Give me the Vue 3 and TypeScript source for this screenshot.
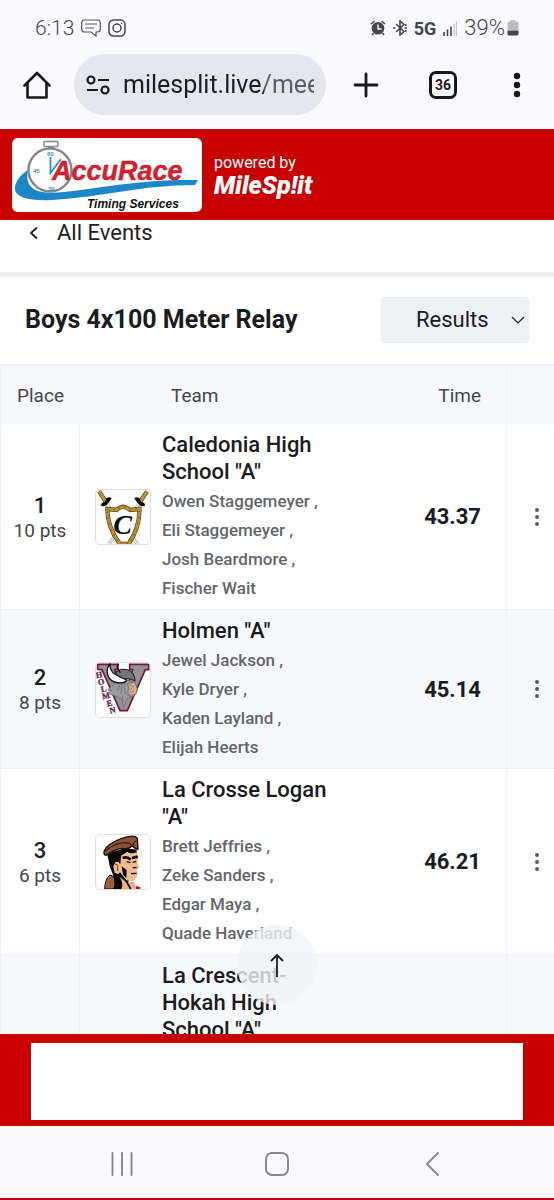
<script setup lang="ts">
import { ref } from 'vue'

interface Team {
  place: number | null
  points: string
  name: string
  runners: string[]
  time: string
  logo: 'shield' | 'viking' | 'ranger' | null
}

const teams: Team[] = [
  {
    place: 1,
    points: '10 pts',
    name: 'Caledonia High School "A"',
    runners: ['Owen Staggemeyer', 'Eli Staggemeyer', 'Josh Beardmore', 'Fischer Wait'],
    time: '43.37',
    logo: 'shield',
  },
  {
    place: 2,
    points: '8 pts',
    name: 'Holmen "A"',
    runners: ['Jewel Jackson', 'Kyle Dryer', 'Kaden Layland', 'Elijah Heerts'],
    time: '45.14',
    logo: 'viking',
  },
  {
    place: 3,
    points: '6 pts',
    name: 'La Crosse Logan "A"',
    runners: ['Brett Jeffries', 'Zeke Sanders', 'Edgar Maya', 'Quade Haverland'],
    time: '46.21',
    logo: 'ranger',
  },
  {
    place: null,
    points: '',
    name: 'La Crescent-Hokah High School "A"',
    runners: [],
    time: '',
    logo: null,
  },
]

const address = ref('milesplit.live/meets')
const view = ref('Results')
</script>

<template>
  <div class="screen">
    <div class="status">
      <div class="status-group">
        <span class="clock">6:13</span>
        <svg class="ico-msg" viewBox="0 0 20 18" fill="none" stroke="#55565b" stroke-width="1.2">
          <path d="M3.5 1h13Q19.300 1 19.300 4v6q0 3-2.800 3h-1.500v4l-5-4H3.500Q.7 13 .7 10V4Q.7 1 3.500 1z" />
          <path d="M4 5h12M4 9h9" />
        </svg>
        <svg class="ico-cam" viewBox="0 0 18 18" fill="none" stroke="#45464b" stroke-width="1.500">
          <rect x="1" y="1" width="16" height="16" rx="4.500" />
          <circle cx="9" cy="9" r="4" />
          <circle cx="13.500" cy="4.500" r=".7" fill="#45464b" stroke="none" />
        </svg>
      </div>
      <div class="status-group">
        <svg class="ico-alarm" viewBox="0 0 16 16">
          <circle cx="8" cy="8.300" r="6.300" fill="#45464b" />
          <path d="M1 4L4.500 1M15 4L11.500 1M3.500 13L2 15M12.500 13L14 15" stroke="#45464b" stroke-width="1.500" />
          <path d="M8 4.500V9h3.500" fill="none" stroke="#faf9ff" stroke-width="1.400" />
        </svg>
        <svg class="ico-bt" viewBox="0 0 14 16" fill="none" stroke="#45464b" stroke-width="1.600">
          <path d="M3 4l8 7.500L7 15V1l4 3.500L3 12" />
          <path d="M0 8h2.500M11.500 8H14M12 5.500l1.500-1M12 10.500l1.500 1" />
        </svg>
        <span class="net">5G</span>
        <svg class="ico-signal" viewBox="0 0 14 15">
          <path d="M1 11v4M4.500 8.500V15M8 5.500V15" stroke="#45464b" stroke-width="1.600" />
          <path d="M11.200 3v12M13.500 0v15" stroke="#c3c3c9" stroke-width="1.300" />
        </svg>
        <span class="power">
          <span class="charge">39%</span>
          <svg class="ico-bat" viewBox="0 0 12 16">
            <path d="M3.500 0h5v1.500h1.500q1.500 0 1.500 1.500V10H.5V3Q.5 1.500 2 1.500h1.500z" fill="#bcbcc1" />
            <path d="M.5 10.500h11V14q0 1.500-1.500 1.500H2Q.5 15.500.5 14z" fill="#45464b" />
          </svg>
        </span>
      </div>
    </div>

    <div class="toolbar">
      <button class="tool home" aria-label="Home">
        <svg viewBox="0 0 28 28" fill="none" stroke="#17181c" stroke-width="2.600" stroke-linejoin="round" stroke-linecap="round">
          <path d="M1.500 14.500L14 2l12.500 12.500M4.500 12v14.500h19V12" />
        </svg>
      </button>
      <div class="omnibox">
        <svg viewBox="0 0 24 20" fill="none" stroke="#1c1d22" stroke-width="2.200">
          <circle cx="5" cy="5" r="3.500" />
          <path d="M12 5h11M1 15h11" />
          <circle cx="19" cy="15" r="3.500" />
        </svg>
        <input v-model="address" type="text" aria-label="Address" />
      </div>
      <button class="tool plus" aria-label="New tab">
        <svg viewBox="0 0 28 28" stroke="#17181c" stroke-width="2.800" stroke-linecap="round">
          <path d="M14 3v22M3 14h22" />
        </svg>
      </button>
      <button class="tool tabs" aria-label="Open tabs">36</button>
      <button class="tool more" aria-label="Menu">
        <svg viewBox="0 0 28 28" fill="#17181c">
          <circle cx="14" cy="5" r="3.200" />
          <circle cx="14" cy="14" r="3.200" />
          <circle cx="14" cy="23" r="3.200" />
        </svg>
      </button>
    </div>

    <header class="brand">
      <svg class="sponsor" viewBox="0 0 190 74" role="img" aria-label="AccuRace Timing Services">
        <rect width="190" height="74" rx="6" fill="#fff" />
        <circle cx="38" cy="32" r="21.500" fill="#fff" stroke="#85878b" stroke-width="2.400" />
        <path d="M16 32C8 37 2 45 3 52C5 60 18 63 40 62C90 59 130 47 183 47L186 42C130 41 90 50 52 54C25 57 12 51 16 32Z" fill="#1e87c8" />
        <rect x="32" y="3.500" width="14" height="5" rx="1" fill="#fff" stroke="#85878b" stroke-width="1.500" />
        <path d="M36 9h6" stroke="#85878b" stroke-width="2" />
        <path d="M38.500 19V35L49 21" fill="none" stroke="#2f8fcf" stroke-width="1.800" />
        <g fill="#2f8fcf" font-family="Liberation Sans, sans-serif" font-size="6" font-weight="700">
          <text x="35" y="18">60</text>
          <text x="21" y="35">45</text>
          <text x="36" y="53">30</text>
        </g>
        <text x="40" y="42" fill="#d8232f" stroke="#a51824" stroke-width=".4" font-family="Liberation Sans, sans-serif" font-size="27" font-weight="700" font-style="italic">AccuRace</text>
        <text x="75" y="70" fill="#111" font-family="Liberation Sans, sans-serif" font-size="12" font-weight="700" font-style="italic">Timing Services</text>
      </svg>
      <div class="powered">
        <span>powered by</span>
        <strong>MileSp!it</strong>
      </div>
    </header>

    <main>
      <a class="back" href="#events">
        <svg viewBox="0 0 10 14" fill="none" stroke="#202124" stroke-width="1.800">
          <path d="M8 1.500L2 7l6 5.500" />
        </svg>
        All Events
      </a>

      <section class="event">
        <h1>Boys 4x100 Meter Relay</h1>
        <div class="picker">
          <select v-model="view" aria-label="View">
            <option>Results</option>
            <option>Entries</option>
          </select>
          <svg viewBox="0 0 14 8" fill="none" stroke="#202124" stroke-width="1.200">
            <path d="M1 1l6 6 6-6" />
          </svg>
        </div>
      </section>

      <table>
        <colgroup>
          <col class="c-place" />
          <col />
          <col class="c-time" />
          <col class="c-menu" />
        </colgroup>
        <thead>
          <tr>
            <th scope="col">Place</th>
            <th scope="col" class="h-team">Team</th>
            <th scope="col" class="h-time">Time</th>
            <th scope="col" aria-label="Actions"></th>
          </tr>
        </thead>
        <tbody>
          <tr v-for="team in teams" :key="team.name">
            <td class="place">
              <strong>{{ team.place }}</strong>
              <span>{{ team.points }}</span>
            </td>
            <td class="team">
              <div class="team-row">
                <div class="crest" :class="{ blank: !team.logo }">
                  <svg v-if="team.logo === 'shield'" viewBox="0 0 162 162">
                    <g fill="none">
                      <path d="M30 38L124 162M132 38L38 162" stroke="#8d8f93" stroke-width="9" />
                      <path d="M30 38L124 162M132 38L38 162" stroke="#fff" stroke-width="6" />
                      <path d="M30 38L124 162M132 38L38 162" stroke="#a9abb0" stroke-width="1.500" />
                      <path d="M9 4L30 36M153 4L132 36" stroke="#5e4a16" stroke-width="13" />
                      <path d="M9 4L30 36M153 4L132 36" stroke="#b8933a" stroke-width="9" />
                    </g>
                    <path d="M15 47q0-11 12-11l4-11q9-6 16 0-5 7-8 12l-8 8q-6 6-16 2zM147 47q0-11-12-11l-4-11q-9-6-16 0 5 7 8 12l8 8q6 6 16 2z" fill="#0b0b0b" />
                    <path d="M34 57L62 60Q67 53 81 50Q95 53 102 60L130 57Q132 110 98 162H72Q34 112 34 57Z" fill="#fff" stroke="#57430e" stroke-width="13" />
                    <path d="M34 57L62 60Q67 53 81 50Q95 53 102 60L130 57Q132 110 98 162H72Q34 112 34 57Z" fill="none" stroke="#b8933a" stroke-width="9" />
                    <path d="M34 57L62 60Q67 53 81 50Q95 53 102 60L130 57Q132 110 98 162H72Q34 112 34 57Z" fill="none" stroke="#5b4716" stroke-width="4" stroke-dasharray="3 15" />
                    <text x="52" y="132" font-family="Liberation Serif, serif" font-weight="700" font-style="italic" font-size="84" fill="#050505">C</text>
                  </svg>
                  <svg v-else-if="team.logo === 'viking'" viewBox="0 0 162 162">
                    <path d="M5 4H66V20H56L83 103L110 20H101V4H158V20H148L94 143H72L18 20H5Z" fill="#939397" stroke="#701a37" stroke-width="5" />
                    <path d="M32 82L58 60 85 48l32 12 7 22-10 18-20 6-12 27-6-27-26-10-20-4 18-10z" fill="#9a9b9e" stroke="#66676b" stroke-width="2" />
                    <path d="M60 26Q76 14 95 20Q116 28 117 54Q98 42 75 50L60 43z" fill="#747579" stroke="#17171a" stroke-width="3" />
                    <path d="M42 4q0 20 14 29 17 10 36 18-2 9-22 9-28-2-35-24Q30 15 42 4z" fill="#fff" stroke="#151518" stroke-width="4" />
                    <path d="M65 18Q61 7 69 3M67 18l6 12" fill="none" stroke="#111" stroke-width="4" />
                    <path d="M94 62l22-5 8 19-3 15-14 9-12-12 4-13z" fill="#d8af8c" stroke="#56574e" stroke-width="2" />
                    <path d="M96 64l16 6M112 70l-8 10M100 88l14-3M92 93l14 10M72 67l-8 17M78 65l-3 28M85 63l3 30M80 98v22" fill="none" stroke="#66676b" stroke-width="2" />
                    <path d="M0 22h8l64 140H0z" fill="#fff" />
                    <g fill="#701a37" stroke="#701a37" stroke-width="1" font-family="Liberation Serif, serif" font-weight="700" font-size="25">
                      <text x="0" y="44" transform="rotate(-12 9 36)">H</text>
                      <text x="6" y="65" transform="rotate(-12 15 57)">O</text>
                      <text x="15" y="86" transform="rotate(-12 24 78)">L</text>
                      <text x="18" y="107" transform="rotate(-12 29 99)">M</text>
                      <text x="32" y="129" transform="rotate(-12 40 121)">E</text>
                      <text x="41" y="150" transform="rotate(-12 50 142)">N</text>
                    </g>
                  </svg>
                  <svg v-else-if="team.logo === 'ranger'" viewBox="0 0 162 162">
                    <path d="M26 162Q26 132 42 120L70 132 66 162z" fill="#98603d" stroke="#1a0f0a" stroke-width="3" />
                    <path d="M34 59Q75 34 122 44L122 74 95 146 112 162H52Q62 136 42 98Q38 76 34 59z" fill="#080606" />
                    <path d="M75 62L94 50Q104 58 121 52L127 66 124 80 130 97 122 106 124 118 115 137Q102 140 91 136L72 112 66 118 56 113 52 94 58 81 67 80 73 88z" fill="#f0bd92" />
                    <path d="M70 125L92 142 116 140 119 162H76Q84 145 70 125z" fill="#e9ae83" />
                    <path d="M80 69Q94 64 104 74M108 69L125 65" stroke="#080606" stroke-width="8" fill="none" />
                    <path d="M92 80l12 3M110 82L121 79M110 98L122 98M105 116L122 115" stroke="#080606" stroke-width="4" fill="none" />
                    <path d="M77 94L92 105 91 130 81 119z" fill="#080606" />
                    <path d="M58 88l7 2v18" fill="none" stroke="#6a351d" stroke-width="3" />
                    <path d="M90 137L104 162" stroke="#080606" stroke-width="5" />
                    <path d="M119 153l14 3v6h-13z" fill="#ae1e2c" />
                    <path d="M24 51Q29 34 48 24Q76 7 103 4Q119 1 124 10L126 43Q115 40 109 33Q98 44 78 40Q54 43 31 61Q23 60 24 51Z" fill="#8b5233" stroke="#1b0e08" stroke-width="4" />
                    <path d="M27 48Q65 18 97 24Q107 26 109 36Q111 21 123 14" fill="none" stroke="#1b0e08" stroke-width="3" />
                  </svg>
                </div>
                <div class="team-text">
                  <h2>{{ team.name }}</h2>
                  <ul v-if="team.runners.length">
                    <li v-for="(runner, i) in team.runners" :key="runner">
                      {{ runner }}{{ i < team.runners.length - 1 ? ' ,' : '' }}
                    </li>
                  </ul>
                </div>
              </div>
            </td>
            <td class="time">{{ team.time }}</td>
            <td class="menu">
              <button v-if="team.time" :aria-label="'Options for ' + team.name">
                <svg viewBox="0 0 6 20" fill="#5b5c61">
                  <circle cx="3" cy="3" r="2" />
                  <circle cx="3" cy="10" r="2" />
                  <circle cx="3" cy="17" r="2" />
                </svg>
              </button>
            </td>
          </tr>
        </tbody>
      </table>

      <button class="to-top" aria-label="Back to top">
        <svg viewBox="0 0 14 24" fill="none" stroke="#1b1c20" stroke-width="1.800">
          <path d="M7 24V2M1 8l6-6 6 6" />
        </svg>
      </button>
    </main>

    <aside class="ad"><div class="ad-slot"></div></aside>

    <nav class="system" aria-label="System">
      <button aria-label="Recent apps">
        <svg viewBox="0 0 26 26" fill="none" stroke="#87878c" stroke-width="1.900" stroke-linecap="round">
          <path d="M3.500 2v22M13 2v22M22.500 2v22" />
        </svg>
      </button>
      <button aria-label="Home screen">
        <svg viewBox="0 0 26 26" fill="none" stroke="#87878c" stroke-width="1.900">
          <rect x="2" y="2" width="22" height="22" rx="6" />
        </svg>
      </button>
      <button aria-label="Back">
        <svg viewBox="0 0 26 26" fill="none" stroke="#87878c" stroke-width="1.900" stroke-linecap="round" stroke-linejoin="round">
          <path d="M19 2L8 13l11 11" />
        </svg>
      </button>
    </nav>
  </div>
</template>

<style>
body {
  margin: 0;
}
</style>

<style scoped>
* {
  box-sizing: border-box;
}

.screen {
  display: flex;
  flex-direction: column;
  height: 100vh;
  overflow: hidden;
  font-family: Roboto, "Noto Sans", sans-serif;
  color: #1b1c20;
  background: #fff;
  border-bottom: 2px solid #b80614;
}

button {
  display: grid;
  place-items: center;
  padding: 0;
  border: 0;
  background: none;
  font: inherit;
  color: inherit;
}

svg {
  display: block;
}

/* phone status bar and browser toolbar */
.status {
  display: flex;
  flex: none;
  justify-content: space-between;
  align-items: flex-end;
  height: 40px;
  padding: 0 35px;
  background: #faf9ff;
  color: #45464b;
}

.status-group {
  display: flex;
  align-items: center;
  gap: 7px;
  height: 24px;
}

.power {
  display: flex;
  align-items: center;
  gap: 2px;
}

.clock {
  font-size: 21px;
  font-weight: 300;
}

.charge {
  font-size: 22px;
  font-weight: 300;
  line-height: 24px;
}

.net {
  font-size: 18px;
  font-weight: 700;
}

.ico-msg {
  width: 20px;
  height: 18px;
}

.ico-cam {
  width: 18px;
  height: 18px;
}

.ico-alarm {
  width: 16px;
  height: 16px;
}

.ico-bt {
  width: 14px;
  height: 16px;
}

.ico-signal {
  width: 14px;
  height: 15px;
}

.ico-bat {
  width: 12px;
  height: 16px;
}

.toolbar {
  display: flex;
  flex: none;
  align-items: center;
  height: 89px;
  padding: 0 23px;
  background: #faf9ff;
}

.tool {
  flex: none;
  width: 28px;
  height: 28px;
}

.tool svg {
  width: 28px;
  height: 28px;
}

.omnibox {
  display: flex;
  flex: 1;
  align-items: center;
  gap: 13px;
  min-width: 0;
  height: 61px;
  margin-left: 23px;
  padding: 0 12px;
  border-radius: 31px;
  background: #e4e6f0;
}

.omnibox svg {
  flex: none;
  width: 24px;
  height: 20px;
}

.omnibox input {
  flex: 1;
  min-width: 0;
  padding: 0;
  border: 0;
  outline: 0;
  background: linear-gradient(90deg, #1c1d22 140px, #5a5c64 142px);
  background-clip: text;
  -webkit-text-fill-color: transparent;
  font-family: inherit;
  font-size: 25px;
}

.plus {
  margin-left: 26px;
}

.tabs {
  margin-left: 49px;
  border: 3px solid #17181c;
  border-radius: 7px;
  font-size: 14px;
  font-weight: 700;
}

.more {
  margin-left: 46px;
}

/* site header */
.brand {
  display: flex;
  flex: none;
  align-items: center;
  gap: 12px;
  height: 91px;
  padding: 0 12px;
  background: #c90000;
  color: #fff;
}

.sponsor {
  flex: none;
  width: 190px;
  height: 74px;
}

.powered {
  display: flex;
  flex-direction: column;
  font-size: 16px;
  line-height: 22px;
}

.powered strong {
  font-size: 25px;
  font-weight: 900;
  font-style: italic;
  line-height: 24px;
}

/* page body */
main {
  position: relative;
  flex: 1;
  min-height: 0;
  overflow: hidden;
}

.back {
  display: flex;
  gap: 18px;
  height: 57px;
  padding-left: 29px;
  border-bottom: 5px solid #f2f2f3;
  color: #202124;
  font-size: 22px;
  line-height: 25px;
  text-decoration: none;
}

.back svg {
  width: 10px;
  height: 26px;
}

.event {
  display: flex;
  align-items: center;
  justify-content: space-between;
  height: 89px;
  padding: 0 25px 2px;
  border-bottom: 2px solid #f0f1f4;
}

h1 {
  margin: 0;
  font-size: 25px;
  font-weight: 700;
}

.picker {
  display: grid;
  align-items: center;
  width: 148px;
}

.picker select {
  grid-area: 1 / 1;
  width: 100%;
  height: 46px;
  padding: 0 0 0 35px;
  border: 0;
  border-radius: 4px;
  appearance: none;
  background: #eff0f5;
  color: #1b1c20;
  font-family: inherit;
  font-size: 22px;
}

.picker svg {
  grid-area: 1 / 1;
  justify-self: end;
  width: 14px;
  height: 8px;
  margin-right: 4px;
  pointer-events: none;
}

table {
  width: 100%;
  table-layout: fixed;
  border-collapse: separate;
  border-spacing: 0;
  border-left: 1px solid #f0f1f4;
}

.c-place {
  width: 79px;
}

.c-time {
  width: 150px;
}

.c-menu {
  width: 47px;
}

th {
  height: 58px;
  padding: 0;
  background: #f7f8fc;
  color: #45464b;
  font-size: 19px;
  font-weight: 400;
}

.h-team {
  padding-left: 91px;
  text-align: left;
}

.h-time {
  padding-right: 25px;
  border-right: 1px solid #f0f1f4;
  text-align: right;
}

td {
  padding: 0;
  border-bottom: 1px solid #f0f1f4;
}

tbody tr:nth-child(even) {
  background: #f7f8fc;
}

.place {
  padding-top: 2px;
  border-right: 1px solid #f0f1f4;
  text-align: center;
}

.place strong,
.place span {
  display: block;
  line-height: 25px;
}

.place strong {
  font-size: 22px;
  font-weight: 500;
}

.place span {
  color: #45464b;
  font-size: 19px;
}

.team-row {
  display: flex;
  align-items: center;
  gap: 11px;
  padding: 7px 0 6px 15px;
}

.crest {
  flex: none;
  width: 56px;
  height: 56px;
  overflow: hidden;
  border: 1px solid #dddee2;
  border-radius: 5px;
  background: #fff;
}

.crest.blank {
  visibility: hidden;
}

.team-text {
  width: 172px;
}

h2 {
  margin: 0 0 2px;
  font-size: 22px;
  font-weight: 500;
  line-height: 27px;
}

ul {
  margin: 0;
  padding: 0;
  list-style: none;
}

li {
  color: #65666a;
  font-size: 17px;
  font-weight: 500;
  line-height: 29px;
}

.time {
  padding-right: 25px;
  border-right: 1px solid #f0f1f4;
  font-size: 22px;
  font-weight: 700;
  text-align: right;
}

.menu button {
  width: 100%;
  height: 40px;
  padding-left: 13px;
}

.menu svg {
  width: 6px;
  height: 20px;
}

.to-top {
  position: absolute;
  bottom: 29px;
  left: calc(50% - 40px);
  width: 80px;
  height: 80px;
  border-radius: 50%;
  background: rgba(241, 242, 246, 0.8);
}

.to-top svg {
  width: 14px;
  height: 24px;
}

/* ad banner and system buttons */
.ad {
  flex: none;
  padding: 9px 31px 6px;
  background: #c90000;
}

.ad-slot {
  height: 77px;
  background: #fff;
}

.system {
  display: grid;
  flex: none;
  grid-template-columns: repeat(3, 1fr);
  height: 72px;
  padding: 4px 45px 0;
  background: #faf9ff;
}

.system svg {
  width: 26px;
  height: 26px;
}
</style>
